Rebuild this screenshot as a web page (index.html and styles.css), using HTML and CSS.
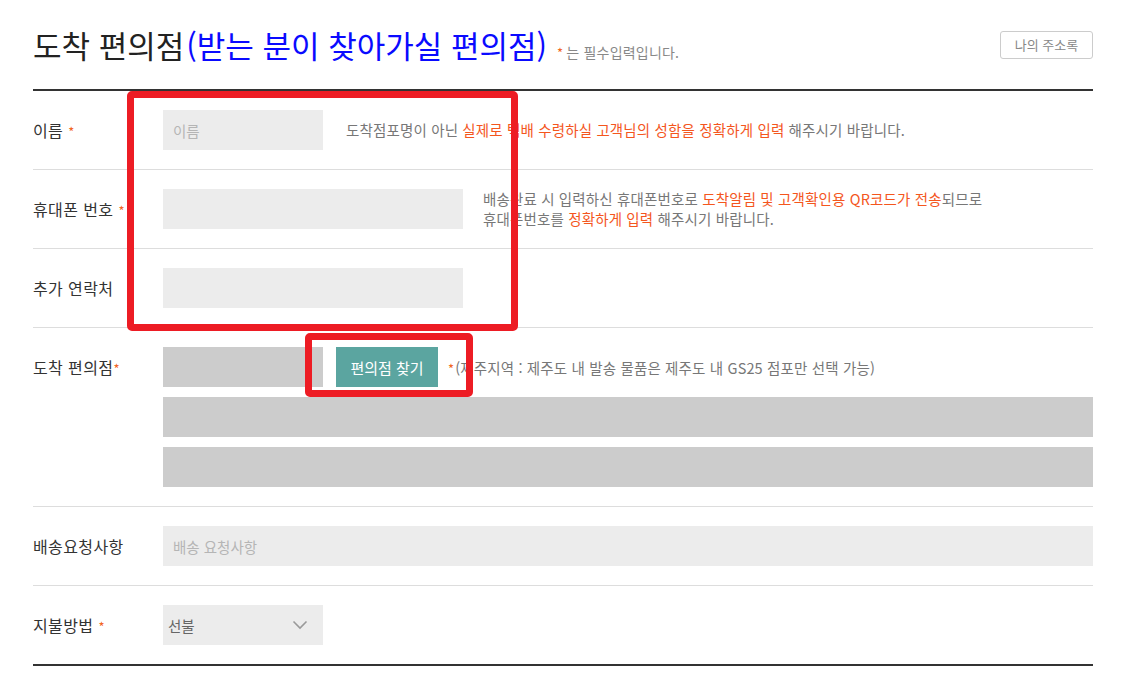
FILE: index.html
```html
<!DOCTYPE html>
<html lang="ko">
<head>
    <meta charset="UTF-8">
    <meta name="viewport" content="width=device-width, initial-scale=1.0">
    <title>도착 편의점</title>
    <link rel="stylesheet" href="styles.css">
</head>
<body>
    <div class="page">
        <div class="header">
            <div class="title-group">
                <h2 class="title">도착 편의점<span class="title-sub">(받는 분이 찾아가실 편의점)</span></h2>
                <span class="required-note"><em class="req">*</em>는 필수입력입니다.</span>
            </div>
            <button type="button" class="address-btn">나의 주소록</button>
        </div>

        <div class="form-table">
            <!-- 이름 -->
            <div class="row">
                <div class="label">이름 <em class="req">*</em></div>
                <div class="field inline">
                    <input type="text" class="input-field w-sm" placeholder="이름">
                    <p class="help help-one">도착점포명이 아닌 <span class="hl">실제로 택배 수령하실 고객님의 성함을 정확하게 입력</span> 해주시기 바랍니다.</p>
                </div>
            </div>

            <!-- 휴대폰 번호 -->
            <div class="row">
                <div class="label">휴대폰 번호 <em class="req">*</em></div>
                <div class="field inline">
                    <input type="text" class="input-field w-md">
                    <p class="help">배송완료 시 입력하신 휴대폰번호로 <span class="hl">도착알림 및 고객확인용 QR코드가 전송</span>되므로<br>휴대폰번호를 <span class="hl">정확하게 입력</span> 해주시기 바랍니다.</p>
                </div>
            </div>

            <!-- 추가 연락처 -->
            <div class="row">
                <div class="label">추가 연락처</div>
                <div class="field inline">
                    <input type="text" class="input-field w-md">
                </div>
            </div>

            <!-- 도착 편의점 -->
            <div class="row">
                <div class="label">도착 편의점<em class="req">*</em></div>
                <div class="field stack">
                    <div class="store-line">
                        <input type="text" class="input-field readonly w-sm" readonly>
                        <button type="button" class="find-btn">편의점 찾기</button>
                        <span class="store-note"><em class="req">*</em>(제주지역 : 제주도 내 발송 물품은 제주도 내 GS25 점포만 선택 가능)</span>
                    </div>
                    <input type="text" class="input-field readonly w-full" readonly>
                    <input type="text" class="input-field readonly w-full" readonly>
                </div>
            </div>

            <!-- 배송요청사항 -->
            <div class="row">
                <div class="label">배송요청사항</div>
                <div class="field inline">
                    <input type="text" class="input-field w-full" placeholder="배송 요청사항">
                </div>
            </div>

            <!-- 지불방법 -->
            <div class="row">
                <div class="label">지불방법 <em class="req">*</em></div>
                <div class="field inline">
                    <div class="select-box w-sm">
                        <span>선불</span>
                        <svg class="chevron" width="16" height="10" viewBox="0 0 16 10"><path d="M1.5 1.5 L8 8 L14.5 1.5" fill="none" stroke="#999" stroke-width="1.6"/></svg>
                    </div>
                </div>
            </div>
        </div>

        <!-- 표시 박스 -->
        <div class="mark mark-inputs"></div>
        <div class="mark mark-find"></div>
    </div>
</body>
</html>
```

FILE: styles.css
```css
* {
    margin: 0;
    padding: 0;
    box-sizing: border-box;
}

body {
    font-family: "Noto Sans CJK KR", "Noto Sans", sans-serif;
    background: #fff;
    color: #333;
}

.page {
    position: relative;
    padding: 0 44px 0 33px;
}

.req {
    font-style: normal;
    color: #f26522;
    font-size: 13px;
}

/* Header */
.header {
    height: 89px;
    display: flex;
    align-items: center;
    justify-content: space-between;
}

.title-group {
    display: flex;
    align-items: baseline;
}

.title {
    font-size: 31px;
    font-weight: 400;
    color: #222;
}

.title-sub {
    margin-left: 2px;
    color: #0a0aff;
}

.required-note {
    margin-left: 10px;
    font-size: 14px;
    color: #888;
    letter-spacing: 0.2px;
}

.required-note .req {
    margin-right: 3px;
}

.address-btn {
    width: 93px;
    height: 28px;
    background: #fff;
    border: 1px solid #ccc;
    border-radius: 3px;
    color: #888;
    font-family: inherit;
    font-size: 13px;
}

/* Form table */
.form-table {
    border-top: 2px solid #333;
    border-bottom: 2px solid #333;
}

.row {
    display: flex;
    padding: 19px 0;
    border-top: 1px solid #ddd;
}

.row:first-child {
    border-top: none;
}

.label {
    width: 130px;
    flex-shrink: 0;
    height: 40px;
    line-height: 40px;
    font-size: 16px;
    letter-spacing: 0.4px;
    color: #333;
}

.field {
    flex: 1;
}

.field.inline {
    display: flex;
    align-items: center;
}

.field.stack {
    display: flex;
    flex-direction: column;
    gap: 10px;
}

.input-field {
    height: 40px;
    padding: 0 10px;
    background: #ececec;
    border: none;
    font-family: inherit;
    font-size: 14.5px;
    color: #333;
}

.input-field::placeholder {
    color: #b5b5b5;
}

.input-field.readonly {
    background: #cccccc;
}

.w-sm { width: 160px; }
.w-md { width: 300px; }
.w-full { width: 100%; }

.help {
    margin-left: 20px;
    font-size: 14.5px;
    line-height: 20px;
    color: #777;
    letter-spacing: 0.15px;
}

.help-one {
    margin-left: 23px;
}

.hl {
    color: #f4561d;
}

.store-line {
    display: flex;
    align-items: center;
}

.find-btn {
    width: 102px;
    height: 40px;
    margin-left: 13px;
    background: #5ba5a0;
    border: none;
    color: #fff;
    font-family: inherit;
    font-size: 15px;
}

.store-note {
    margin-left: 10px;
    font-size: 14.5px;
    color: #777;
    letter-spacing: 0.15px;
}

.store-note .req {
    margin-right: 1px;
}

.select-box {
    height: 40px;
    padding: 0 15px 0 5px;
    background: #ececec;
    display: flex;
    align-items: center;
    justify-content: space-between;
    font-size: 14.5px;
    color: #666;
}

/* Red annotation boxes */
.mark {
    position: absolute;
    border: 7px solid #ed1c24;
    border-radius: 5px;
}

.mark-inputs {
    left: 127px;
    top: 91px;
    width: 391px;
    height: 240px;
}

.mark-find {
    left: 305px;
    top: 333px;
    width: 168px;
    height: 64px;
}
```
